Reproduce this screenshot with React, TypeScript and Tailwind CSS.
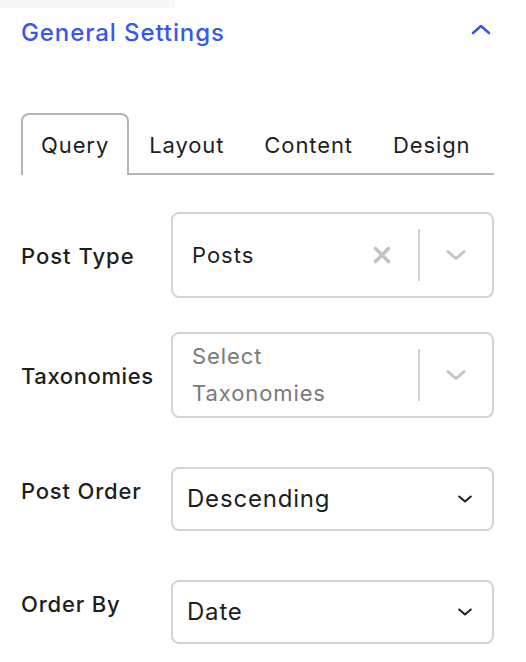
import React from "react";

const font = { fontFamily: "Inter, 'Noto Sans', sans-serif" };

function ChevronDown({ className }: { className?: string }) {
  return (
    <svg viewBox="0 0 24 24" className={className} fill="none" stroke="currentColor" strokeWidth={2.4} strokeLinecap="round" strokeLinejoin="round">
      <path d="M5 9l7 6 7-6" />
    </svg>
  );
}

export default function App() {
  return (
    <div className="relative w-[526px] h-[662px] bg-white text-[#1e1e1e] overflow-hidden" style={font}>
      <div className="absolute left-0 top-0 w-[175px] h-[8px] bg-[#f7f7f7]" />
      <div className="px-[21px]">
        <div className="flex items-center justify-between h-[64px]">
          <span className="text-[24px] font-medium text-[#3858e9] tracking-[0.9px] pt-[2px]">General Settings</span>
          <svg viewBox="0 0 24 24" className="w-[24px] h-[24px] text-[#3858e9] mr-[12px] mb-[4px]" fill="none" stroke="currentColor" strokeWidth={2.6} strokeLinecap="round" strokeLinejoin="round">
            <path d="M4 15l8-7 8 7" />
          </svg>
        </div>

        <div className="mt-[49px] flex items-end w-[473px] h-[62px] border-b-2 border-[#b4b4b4] text-[22px] tracking-[0.9px]">
          <div className="h-[62px] mb-[-2px] px-[18px] flex items-center border-2 border-b-0 border-[#b4b4b4] rounded-t-[8px] bg-white">
            Query
          </div>
          <div className="h-[60px] pt-[4px] px-[20px] flex items-center">Layout</div>
          <div className="h-[60px] pt-[4px] px-[20px] flex items-center">Content</div>
          <div className="h-[60px] pt-[4px] px-[20px] flex items-center">Design</div>
        </div>

        <div className="mt-[37px] flex items-center">
          <div className="w-[150px] text-[22px] tracking-[1px] font-medium pt-[2px]">Post Type</div>
          <div className="w-[323px] h-[86px] border-2 border-[#d4d4d4] rounded-[8px] flex items-center">
            <span className="pl-[19px] flex-1 text-[22px] tracking-[1px]">Posts</span>
            <svg viewBox="0 0 24 24" className="w-[26px] h-[26px] text-[#c4c4c4] mr-[23px]" fill="none" stroke="currentColor" strokeWidth={3.4} strokeLinecap="round">
              <path d="M6 6l12 12M18 6L6 18" />
            </svg>
            <div className="w-[2px] h-[52px] bg-[#d4d4d4]" />
            <ChevronDown className="w-[28px] h-[28px] text-[#c4c4c4] mx-[22px]" />
          </div>
        </div>

        <div className="mt-[34px] flex items-center">
          <div className="w-[150px] text-[22px] tracking-[0.6px] font-medium pt-[2px]">Taxonomies</div>
          <div className="w-[323px] h-[86px] border-2 border-[#d4d4d4] rounded-[8px] flex items-center">
            <span className="pl-[19px] flex-1 text-[22px] tracking-[0.9px] leading-[37px] text-[#7a7a7a]">Select<br />Taxonomies</span>
            <div className="w-[2px] h-[52px] bg-[#d4d4d4]" />
            <ChevronDown className="w-[28px] h-[28px] text-[#c4c4c4] mx-[22px]" />
          </div>
        </div>

        <div className="mt-[49px] flex items-start">
          <div className="w-[150px] text-[22px] tracking-[0.8px] font-medium pt-[8px]">Post Order</div>
          <div className="w-[323px] h-[64px] border-2 border-[#d4d4d4] rounded-[8px] flex items-center">
            <span className="pl-[14px] flex-1 text-[24px] tracking-[0.8px]">Descending</span>
            <ChevronDown className="w-[20px] h-[20px] text-[#1e1e1e] mr-[17px]" />
          </div>
        </div>

        <div className="mt-[49px] flex items-start">
          <div className="w-[150px] text-[22px] tracking-[0.8px] font-medium pt-[8px]">Order By</div>
          <div className="w-[323px] h-[64px] border-2 border-[#d4d4d4] rounded-[8px] flex items-center">
            <span className="pl-[14px] flex-1 text-[24px] tracking-[0.8px]">Date</span>
            <ChevronDown className="w-[20px] h-[20px] text-[#1e1e1e] mr-[17px]" />
          </div>
        </div>
      </div>
    </div>
  );
}
